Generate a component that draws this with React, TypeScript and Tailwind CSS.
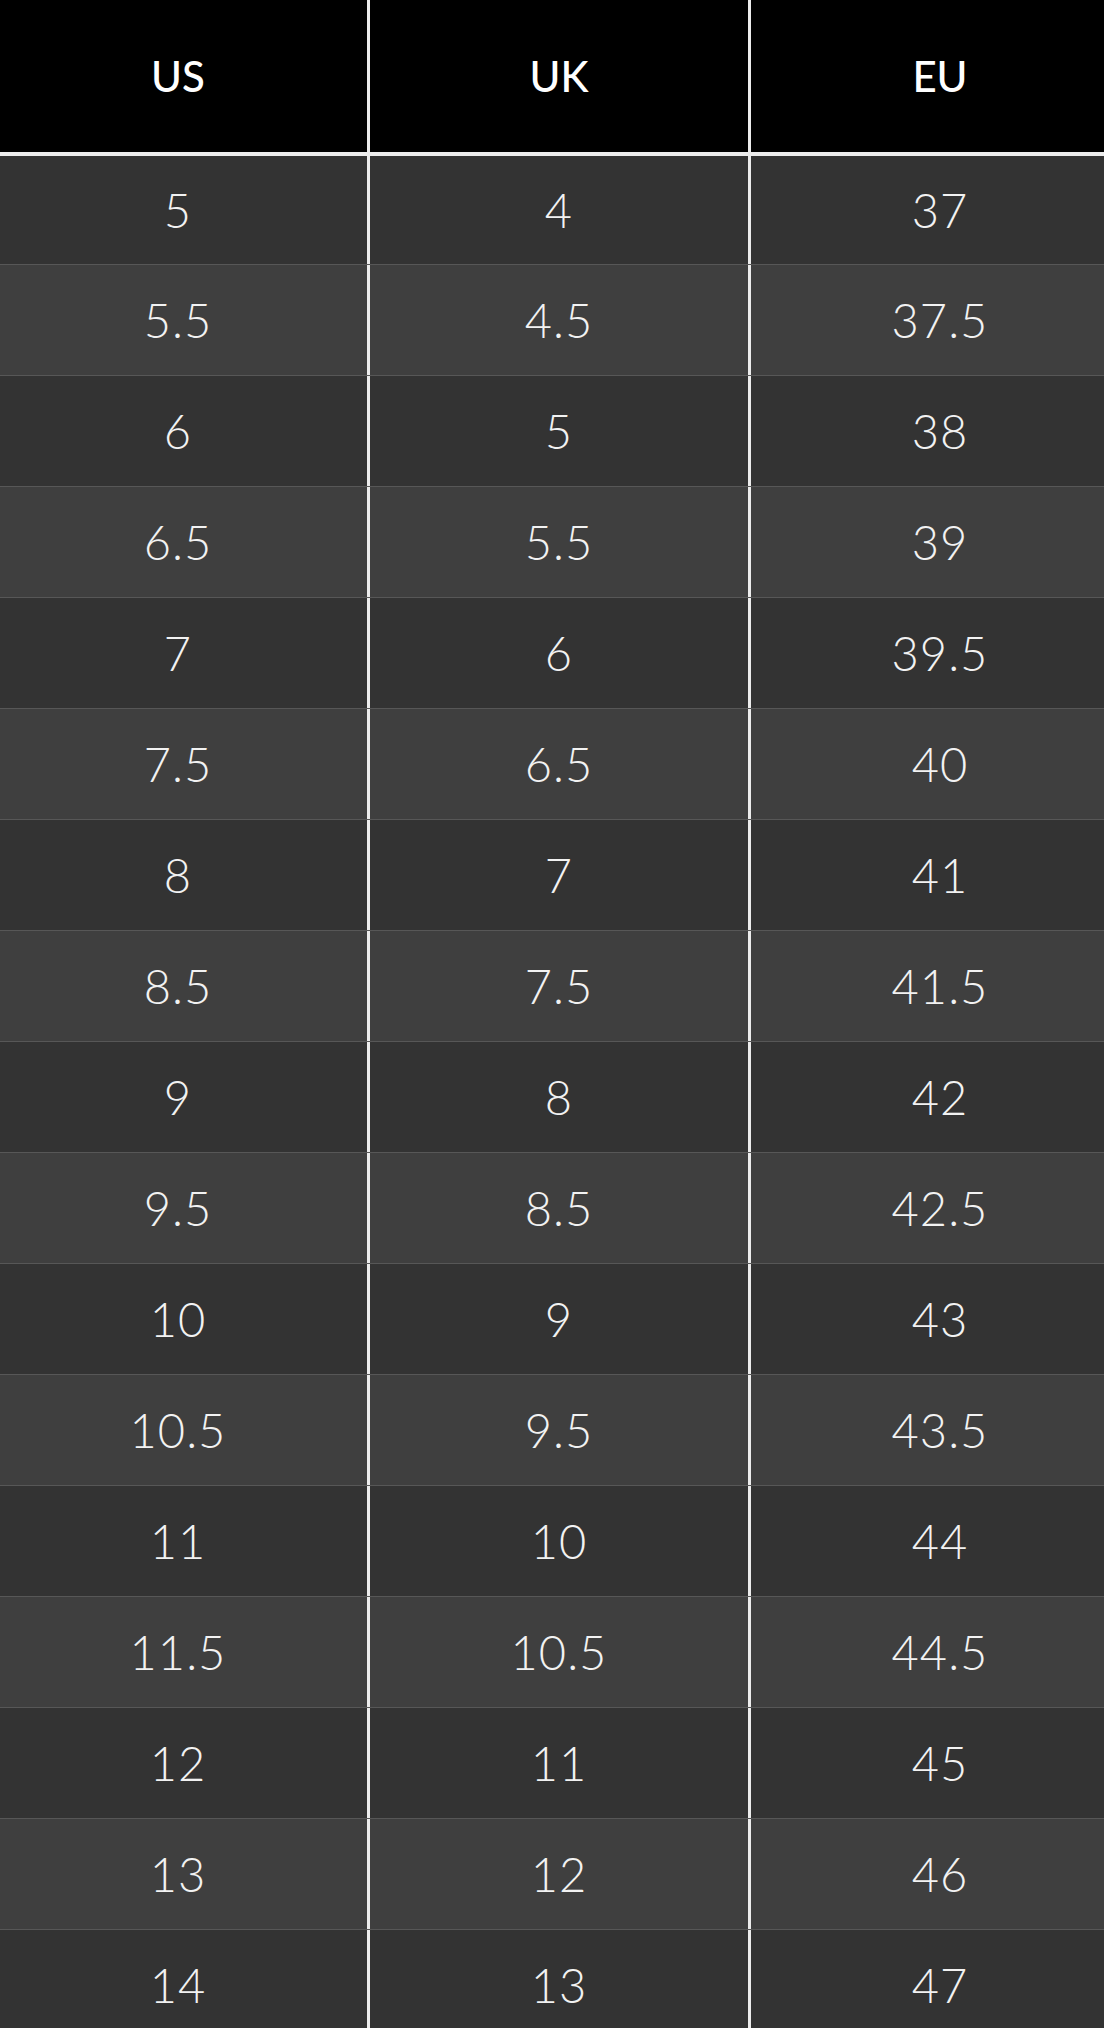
const sizes: [string, string, string][] = [
  ['5', '4', '37'],
  ['5.5', '4.5', '37.5'],
  ['6', '5', '38'],
  ['6.5', '5.5', '39'],
  ['7', '6', '39.5'],
  ['7.5', '6.5', '40'],
  ['8', '7', '41'],
  ['8.5', '7.5', '41.5'],
  ['9', '8', '42'],
  ['9.5', '8.5', '42.5'],
  ['10', '9', '43'],
  ['10.5', '9.5', '43.5'],
  ['11', '10', '44'],
  ['11.5', '10.5', '44.5'],
  ['12', '11', '45'],
  ['13', '12', '46'],
  ['14', '13', '47'],
]

export default function App() {
  return (
    <div className="w-full h-[2028px] overflow-hidden bg-[#333333] font-['Lato','DejaVu_Sans',sans-serif]">
      {/* table is wider than the viewport and cropped on both sides */}
      <div className="ml-[-11px] w-[1140px]">
        {/* ── Header ── */}
        <div className="grid grid-cols-[378px_384px_378px] h-[156px] bg-black border-b-[4px] border-[#ececec] text-white text-[42px] font-medium">
          <div className="flex items-center justify-center">US</div>
          <div className="flex items-center justify-center border-x-[3px] border-[#ececec]">UK</div>
          <div className="flex items-center justify-center">EU</div>
        </div>

        {/* ── Rows ── */}
        {sizes.map((row, i) => (
          <div
            key={i}
            className={`grid grid-cols-[378px_384px_378px] text-[#f2f2f2] text-[47px] font-light tracking-[1px] ${
              i === 0 ? 'h-[108px]' : 'h-[111px] border-t border-[#575757]'
            } ${i % 2 === 0 ? 'bg-[#333333]' : 'bg-[#3f3f3f]'}`}
          >
            <div className="flex items-center justify-center">{row[0]}</div>
            <div className="flex items-center justify-center border-x-[3px] border-[#ececec]">{row[1]}</div>
            <div className="flex items-center justify-center">{row[2]}</div>
          </div>
        ))}
      </div>
    </div>
  )
}
